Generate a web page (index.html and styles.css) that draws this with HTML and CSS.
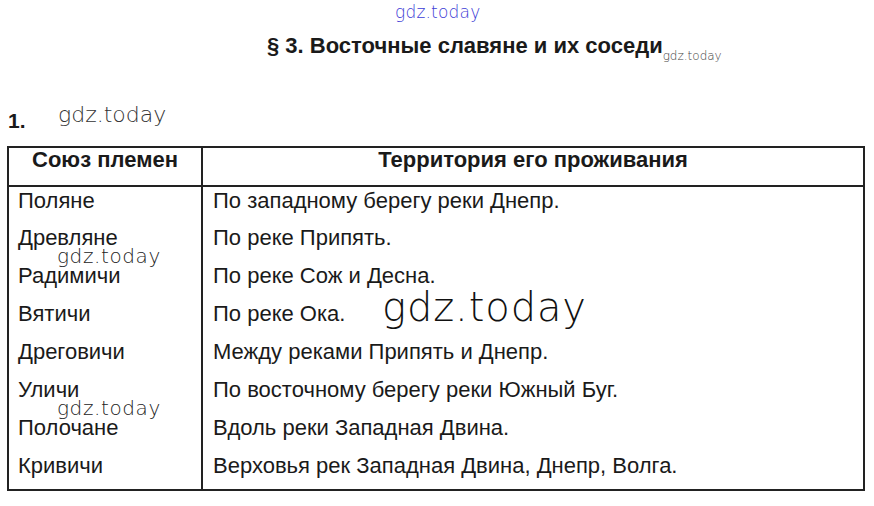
FILE: index.html
```html
<!DOCTYPE html>
<html lang="ru">
<head>
<meta charset="utf-8">
<link rel="stylesheet" href="styles.css">
</head>
<body>
<div class="page">
  <div class="wm-top">gdz.today</div>
  <h1 class="title">§ 3. Восточные славяне и их соседи<span class="wm-small">gdz.today</span></h1>
  <div class="task"><span class="num">1.</span><span class="wm-task">gdz.today</span></div>
  <table class="grid">
    <thead>
      <tr><th class="c1">Союз племен</th><th class="c2">Территория его проживания</th></tr>
    </thead>
    <tbody>
      <tr><td>Поляне</td><td>По западному берегу реки Днепр.</td></tr>
      <tr><td>Древляне</td><td>По реке Припять.</td></tr>
      <tr><td>Радимичи</td><td>По реке Сож и Десна.</td></tr>
      <tr><td>Вятичи</td><td>По реке Ока.</td></tr>
      <tr><td>Дреговичи</td><td>Между реками Припять и Днепр.</td></tr>
      <tr><td>Уличи</td><td>По восточному берегу реки Южный Буг.</td></tr>
      <tr><td>Полочане</td><td>Вдоль реки Западная Двина.</td></tr>
      <tr><td>Кривичи</td><td>Верховья рек Западная Двина, Днепр, Волга.</td></tr>
    </tbody>
  </table>
  <div class="wm wm-a">gdz.today</div>
  <div class="wm wm-b">gdz.today</div>
  <div class="wm wm-big">gdz.today</div>
</div>
</body>
</html>
```

FILE: styles.css
```css
html, body {
  margin: 0;
  padding: 0;
  background: #ffffff;
}
body {
  font-family: "Liberation Sans", Arial, sans-serif;
  color: #1a1a1a;
}
.page {
  position: relative;
  width: 874px;
  height: 506px;
  overflow: hidden;
}
.wm-top {
  height: 26px;
  padding-left: 395px;
  font-family: "DejaVu Sans", sans-serif;
  font-size: 17px;
  line-height: 24px;
  color: #3c3cd6;
  letter-spacing: 0.2px;
  font-weight: 200;
}
.title {
  margin: 0;
  padding-left: 267px;
  height: 40px;
  font-size: 22px;
  line-height: 40px;
  font-weight: bold;
  color: #1a1a1a;
  white-space: nowrap;
}
.wm-small {
  font-family: "DejaVu Sans", sans-serif;
  font-weight: 200;
  font-size: 12px;
  color: #444;
  vertical-align: -7px;
  letter-spacing: 0;
}
.task {
  display: flex;
  align-items: baseline;
  height: 80px;
  padding-top: 36px;
  box-sizing: border-box;
  padding-left: 8px;
}
.num {
  font-weight: bold;
  font-size: 21px;
  width: 50px;
  position: relative;
  top: 6px;
}
.wm-task {
  font-family: "DejaVu Sans", sans-serif;
  font-size: 22px;
  color: #333;
  font-weight: 200;
  letter-spacing: 0;
}
.grid {
  margin-left: 7px;
  width: 858px;
  border-collapse: collapse;
  font-size: 22px;
  border: 2px solid #222;
}
.grid th {
  box-sizing: border-box;
  height: 39px;
  font-weight: bold;
  text-align: center;
  border: 2px solid #222;
  padding: 1px 0 0 0;
  line-height: 22px;
  vertical-align: top;
}
.grid .c1 { width: 194px; }
.grid td {
  box-sizing: border-box;
  height: 38px;
  padding: 3px 0 0 9px;
  line-height: 22px;
  vertical-align: top;
  border-left: 2px solid #222;
}
.grid td + td { padding-left: 10px; }
.wm {
  position: absolute;
  font-family: "DejaVu Sans", sans-serif;
  font-weight: 200;
  color: #222;
}
.wm-a { left: 57px; top: 244px; font-size: 20px; letter-spacing: 0.6px; }
.wm-b { left: 57px; top: 396px; font-size: 20px; letter-spacing: 0.6px; }
.wm-big { left: 382px; top: 284px; font-size: 40px; color: #111; letter-spacing: 0.9px; }
```
